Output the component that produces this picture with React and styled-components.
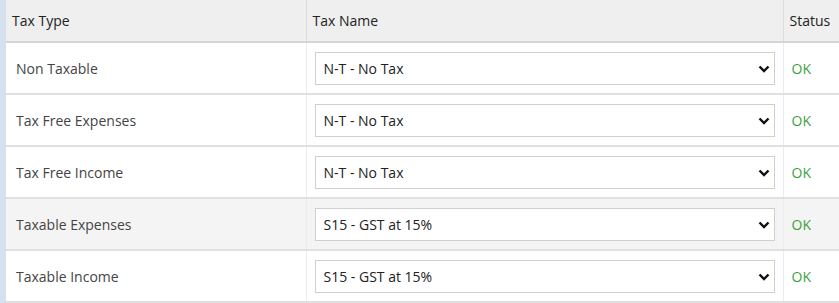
import React from 'react';
import styled, { createGlobalStyle } from 'styled-components';

const GlobalStyle = createGlobalStyle`
  body {
    margin: 0;
    background: #ffffff;
    font-family: 'Open Sans', 'Noto Sans', sans-serif;
    color: #333333;
  }
`;

const Page = styled.div`
  display: flex;
  width: 839px;
  height: 303px;
  overflow: hidden;
  border-left: 6px solid #d6e0ef;
  box-sizing: border-box;
`;

const Table = styled.table`
  width: 833px;
  table-layout: fixed;
  border-collapse: collapse;
  font-size: 14px;
`;

const Col = styled.col`
  width: ${(p) => p.w}px;
`;

const HeadCell = styled.th`
  height: 41px;
  padding: 0 6px;
  background: #efefef;
  border-bottom: 2px solid #d4d4d4;
  border-left: ${(p) => (p.first ? 'none' : '1px solid #dcdcdc')};
  text-align: left;
  font-weight: 400;
  color: #222;
  white-space: nowrap;
  overflow: hidden;
`;

const Row = styled.tr`
  background: ${(p) => (p.shaded ? '#f4f4f4' : '#ffffff')};
`;

const Cell = styled.td`
  height: 50px;
  padding: 0 ${(p) => p.pad}px;
  border-bottom: 2px solid #e0e0e0;
  border-left: ${(p) => (p.first ? 'none' : '1px solid #ebebf7')};
  vertical-align: middle;
  color: #444;
`;

const SelectWrap = styled.div`
  position: relative;
  height: 33px;
`;

const Select = styled.select`
  appearance: none;
  width: 100%;
  height: 33px;
  padding: 0 30px 0 8px;
  border: 1px solid #cfcfcf;
  background: #fff;
  font-family: 'Open Sans', 'Noto Sans', sans-serif;
  font-size: 14px;
  color: #222;
  outline: none;
`;

const Chevron = styled.svg`
  position: absolute;
  right: 5px;
  top: 13px;
  pointer-events: none;
`;

const Status = styled.span`
  color: #3e9f3e;
  font-size: 14px;
`;

const rows = [
  { type: 'Non Taxable', tax: 'N-T - No Tax' },
  { type: 'Tax Free Expenses', tax: 'N-T - No Tax' },
  { type: 'Tax Free Income', tax: 'N-T - No Tax' },
  { type: 'Taxable Expenses', tax: 'S15 - GST at 15%', shaded: true },
  { type: 'Taxable Income', tax: 'S15 - GST at 15%' },
];

function TaxSelect({ value }) {
  return (
    <SelectWrap>
      <Select defaultValue={value}>
        <option>N-T - No Tax</option>
        <option>S15 - GST at 15%</option>
      </Select>
      <Chevron width="12" height="8" viewBox="0 0 12 8">
        <polyline points="1.5,1.5 6,6 10.5,1.5" fill="none" stroke="#111" strokeWidth="2.4" />
      </Chevron>
    </SelectWrap>
  );
}

export default function App() {
  return (
    <>
      <GlobalStyle />
      <Page>
        <Table>
          <colgroup>
            <Col w={300} />
            <Col w={477} />
            <Col w={56} />
          </colgroup>
          <thead>
            <tr>
              <HeadCell first>Tax Type</HeadCell>
              <HeadCell>Tax Name</HeadCell>
              <HeadCell>Status</HeadCell>
            </tr>
          </thead>
          <tbody>
            {rows.map((r) => (
              <Row key={r.type} shaded={r.shaded}>
                <Cell first pad={10}>{r.type}</Cell>
                <Cell pad={8}>
                  <TaxSelect value={r.tax} />
                </Cell>
                <Cell pad={8}>
                  <Status>OK</Status>
                </Cell>
              </Row>
            ))}
          </tbody>
        </Table>
      </Page>
    </>
  );
}
